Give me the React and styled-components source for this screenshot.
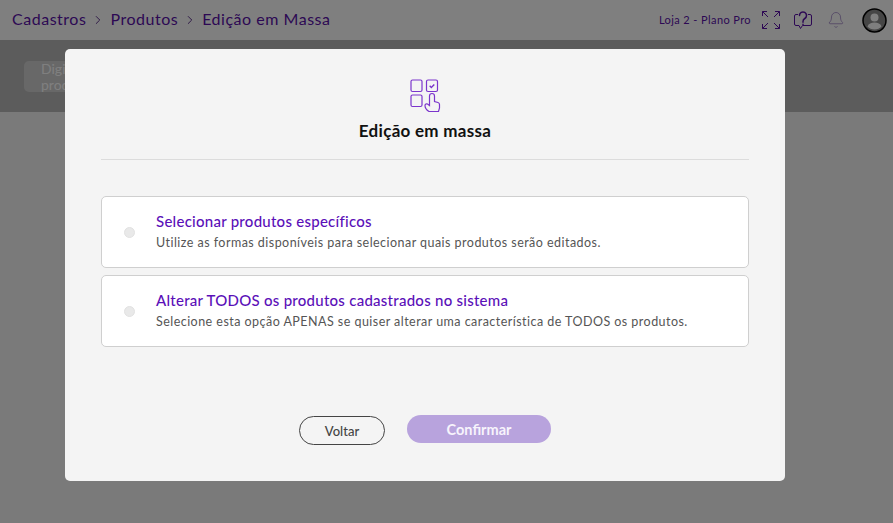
import React from "react";
import styled, { createGlobalStyle } from "styled-components";
import { Bell, ChevronRight } from "lucide-react";

const GlobalStyle = createGlobalStyle`
  html, body {
    margin: 0;
    padding: 0;
    height: 100%;
    font-family: "Lato", "Noto Sans", sans-serif;
  }
  #root {
    height: 100%;
  }
  * {
    box-sizing: border-box;
  }
`;

const Page = styled.div`
  position: relative;
  height: 523px;
  overflow: hidden;
  background: #f4f4f4;
`;

const Header = styled.header`
  height: 40px;
  padding: 0 6px 0 12px;
  background: #ffffff;
  display: flex;
  align-items: center;
  justify-content: space-between;
`;

const Breadcrumb = styled.nav`
  display: flex;
  align-items: center;
  gap: 5px;
  padding-bottom: 3px;
  font-size: 16px;
  letter-spacing: 0.52px;
  color: #5a11a8;
`;

const Separator = styled(ChevronRight)`
  margin-top: 3px;
  color: #4a1a80;
`;

const HeaderRight = styled.div`
  display: flex;
  align-items: center;
`;

const StoreLabel = styled.span`
  font-size: 11px;
  letter-spacing: 0.4px;
  color: #5a11a8;
  margin: 0 11px 2px 0;
`;

const IconSlot = styled.span`
  display: flex;
  margin-right: ${(p) => p.$gap}px;
  color: ${(p) => p.$color || "#5a11a8"};
`;

const SearchBand = styled.section`
  height: 72px;
  padding: 21px 24px;
  background: #b9b9b9;
`;

const SearchBox = styled.div`
  width: 120px;
  height: 31px;
  padding: 0 17px;
  border-radius: 5px;
  background: #d0d0d0;
  color: #ffffff;
  font-size: 14px;
  line-height: 16px;
`;

const Overlay = styled.div`
  position: absolute;
  inset: 0;
  background: rgba(0, 0, 0, 0.5);
  display: flex;
  justify-content: center;
  padding: 49px 43px 0 0;
`;

const Modal = styled.div`
  width: 720px;
  height: 432px;
  padding: 30px 36px 0;
  border-radius: 5px;
  background: #f4f4f4;
  display: flex;
  flex-direction: column;
`;

const ModalHeader = styled.div`
  height: 81px;
  border-bottom: 1px solid #dcdcdc;
  display: flex;
  flex-direction: column;
  align-items: center;
`;

const ModalTitle = styled.h2`
  margin: 9px 0 0;
  font-size: 17px;
  line-height: 20px;
  font-weight: 700;
  letter-spacing: 0.28px;
  color: #111111;
`;

const Options = styled.div`
  margin-top: 36px;
  display: flex;
  flex-direction: column;
  gap: 7px;
`;

const OptionCard = styled.label`
  height: 72px;
  padding: 0 0 0 22px;
  border: 1px solid #cfcfcf;
  border-radius: 5px;
  background: #ffffff;
  display: flex;
  align-items: center;
`;

const Radio = styled.span`
  width: 11px;
  height: 11px;
  border-radius: 50%;
  background: #e9e9e9;
  border: 1px solid #e2e2e2;
  margin-right: 21px;
  flex-shrink: 0;
`;

const OptionText = styled.div`
  display: flex;
  flex-direction: column;
  gap: 5px;
  padding-bottom: 1px;
`;

const OptionTitle = styled.span`
  font-size: 15px;
  line-height: 18px;
  letter-spacing: 0.26px;
  color: #5b10b8;
  font-weight: 500;
`;

const OptionHint = styled.span`
  font-size: 12.5px;
  line-height: 16px;
  letter-spacing: 0.46px;
  color: #555555;
`;

const Actions = styled.div`
  margin-top: 68px;
  display: flex;
  justify-content: center;
  align-items: flex-start;
  gap: 22px;
`;

const BackButton = styled.button`
  width: 86px;
  height: 29px;
  margin-top: 1px;
  border: 1px solid #444444;
  border-radius: 15px;
  background: transparent;
  color: #444444;
  font: 500 13px "Lato", sans-serif;
`;

const ConfirmButton = styled.button`
  width: 144px;
  height: 28px;
  border: 0;
  border-radius: 14px;
  background: #b8a3dd;
  color: #f7f4fc;
  font: 700 14.5px "Lato", sans-serif;
`;

const ExpandIcon = () => (
  <svg width="18" height="18" viewBox="0 0 18 18" fill="none" stroke="currentColor" strokeWidth="1">
    <path d="M.5 5v-4.500H5M.5 .5L6 6M13 .5h4.500V5M17.500 .5L12 6M.5 13v4.500H5M.5 17.500L6 12M13 17.500h4.500V13M17.500 17.500L12 12" />
  </svg>
);

const HelpIcon = () => (
  <svg width="18" height="18" viewBox="0 0 18 18" fill="none" stroke="currentColor" strokeWidth="1" strokeLinecap="round">
    <path d="M3.800 3.500H2A1.500 1.500 0 0 0 .5 5v8A1.500 1.500 0 0 0 2 14.500h3l1.500 3 2-3H16a1.500 1.500 0 0 0 1.500-1.500V5A1.500 1.500 0 0 0 16 3.500h-1.800" />
    <path d="M5.500 4.500a3.500 3.500 0 1 1 5.300 3c-1.200.7-1.800 1.500-1.800 3v.8M9 13.200v.2" strokeWidth="1.500" />
  </svg>
);

const AvatarIcon = () => (
  <svg width="25" height="25" viewBox="0 0 25 25">
    <circle cx="12.500" cy="12.500" r="11.500" fill="#8c8c8c" stroke="#000000" strokeWidth="1.500" />
    <circle cx="12.500" cy="9.500" r="4" fill="#ffffff" />
    <path d="M5.500 18.500c1-3 3.800-4 7-4s6 1 7 4c-1.700 2-4 3-7 3s-5.300-1-7-3z" fill="#ffffff" />
  </svg>
);

const MassEditIcon = () => (
  <svg width="31" height="33" viewBox="0 0 31 33" fill="none" stroke="#7b35cc" strokeWidth="1.200">
    <rect x="1" y="1" width="11" height="11.500" rx="1.500" />
    <rect x="16.500" y="1" width="11" height="11.500" rx="1.500" />
    <path d="M19.700 6.800l1.600 1.600 3-3" strokeWidth="1.400" />
    <rect x="1" y="16" width="11" height="11.500" rx="1.500" />
    <path d="M19 32.500C16.500 31 15 29 15 26.500 15 25 16.500 24.500 17.500 25l2 1.500V17a2.500 2.500 0 0 1 5 0v5.500l3.500 1c1 .3 1.500 1 1.500 2V29l-1 3.500z" />
  </svg>
);

const options = [
  {
    title: "Selecionar produtos específicos",
    hint: "Utilize as formas disponíveis para selecionar quais produtos serão editados.",
  },
  {
    title: "Alterar TODOS os produtos cadastrados no sistema",
    hint: "Selecione esta opção APENAS se quiser alterar uma característica de TODOS os produtos.",
  },
];

const App = () => {
  return (
    <Page>
      <GlobalStyle />
      <Header>
        <Breadcrumb>
          Cadastros
          <Separator size={14} strokeWidth={1.5} />
          Produtos
          <Separator size={14} strokeWidth={1.5} />
          Edição em Massa
        </Breadcrumb>
        <HeaderRight>
          <StoreLabel>Loja 2 - Plano Pro</StoreLabel>
          <IconSlot $gap={14}>
            <ExpandIcon />
          </IconSlot>
          <IconSlot $gap={15}>
            <HelpIcon />
          </IconSlot>
          <IconSlot $gap={17} $color="#a48bc8">
            <Bell size={18} strokeWidth={1.1} />
          </IconSlot>
          <IconSlot $gap={0}>
            <AvatarIcon />
          </IconSlot>
        </HeaderRight>
      </Header>
      <SearchBand>
        <SearchBox>
          Digite o
          <br />
          produto
        </SearchBox>
      </SearchBand>
      <Overlay>
        <Modal>
          <ModalHeader>
            <MassEditIcon />
            <ModalTitle>Edição em massa</ModalTitle>
          </ModalHeader>
          <Options>
            {options.map((option) => (
              <OptionCard key={option.title}>
                <Radio />
                <OptionText>
                  <OptionTitle>{option.title}</OptionTitle>
                  <OptionHint>{option.hint}</OptionHint>
                </OptionText>
              </OptionCard>
            ))}
          </Options>
          <Actions>
            <BackButton>Voltar</BackButton>
            <ConfirmButton>Confirmar</ConfirmButton>
          </Actions>
        </Modal>
      </Overlay>
    </Page>
  );
};

export default App;
